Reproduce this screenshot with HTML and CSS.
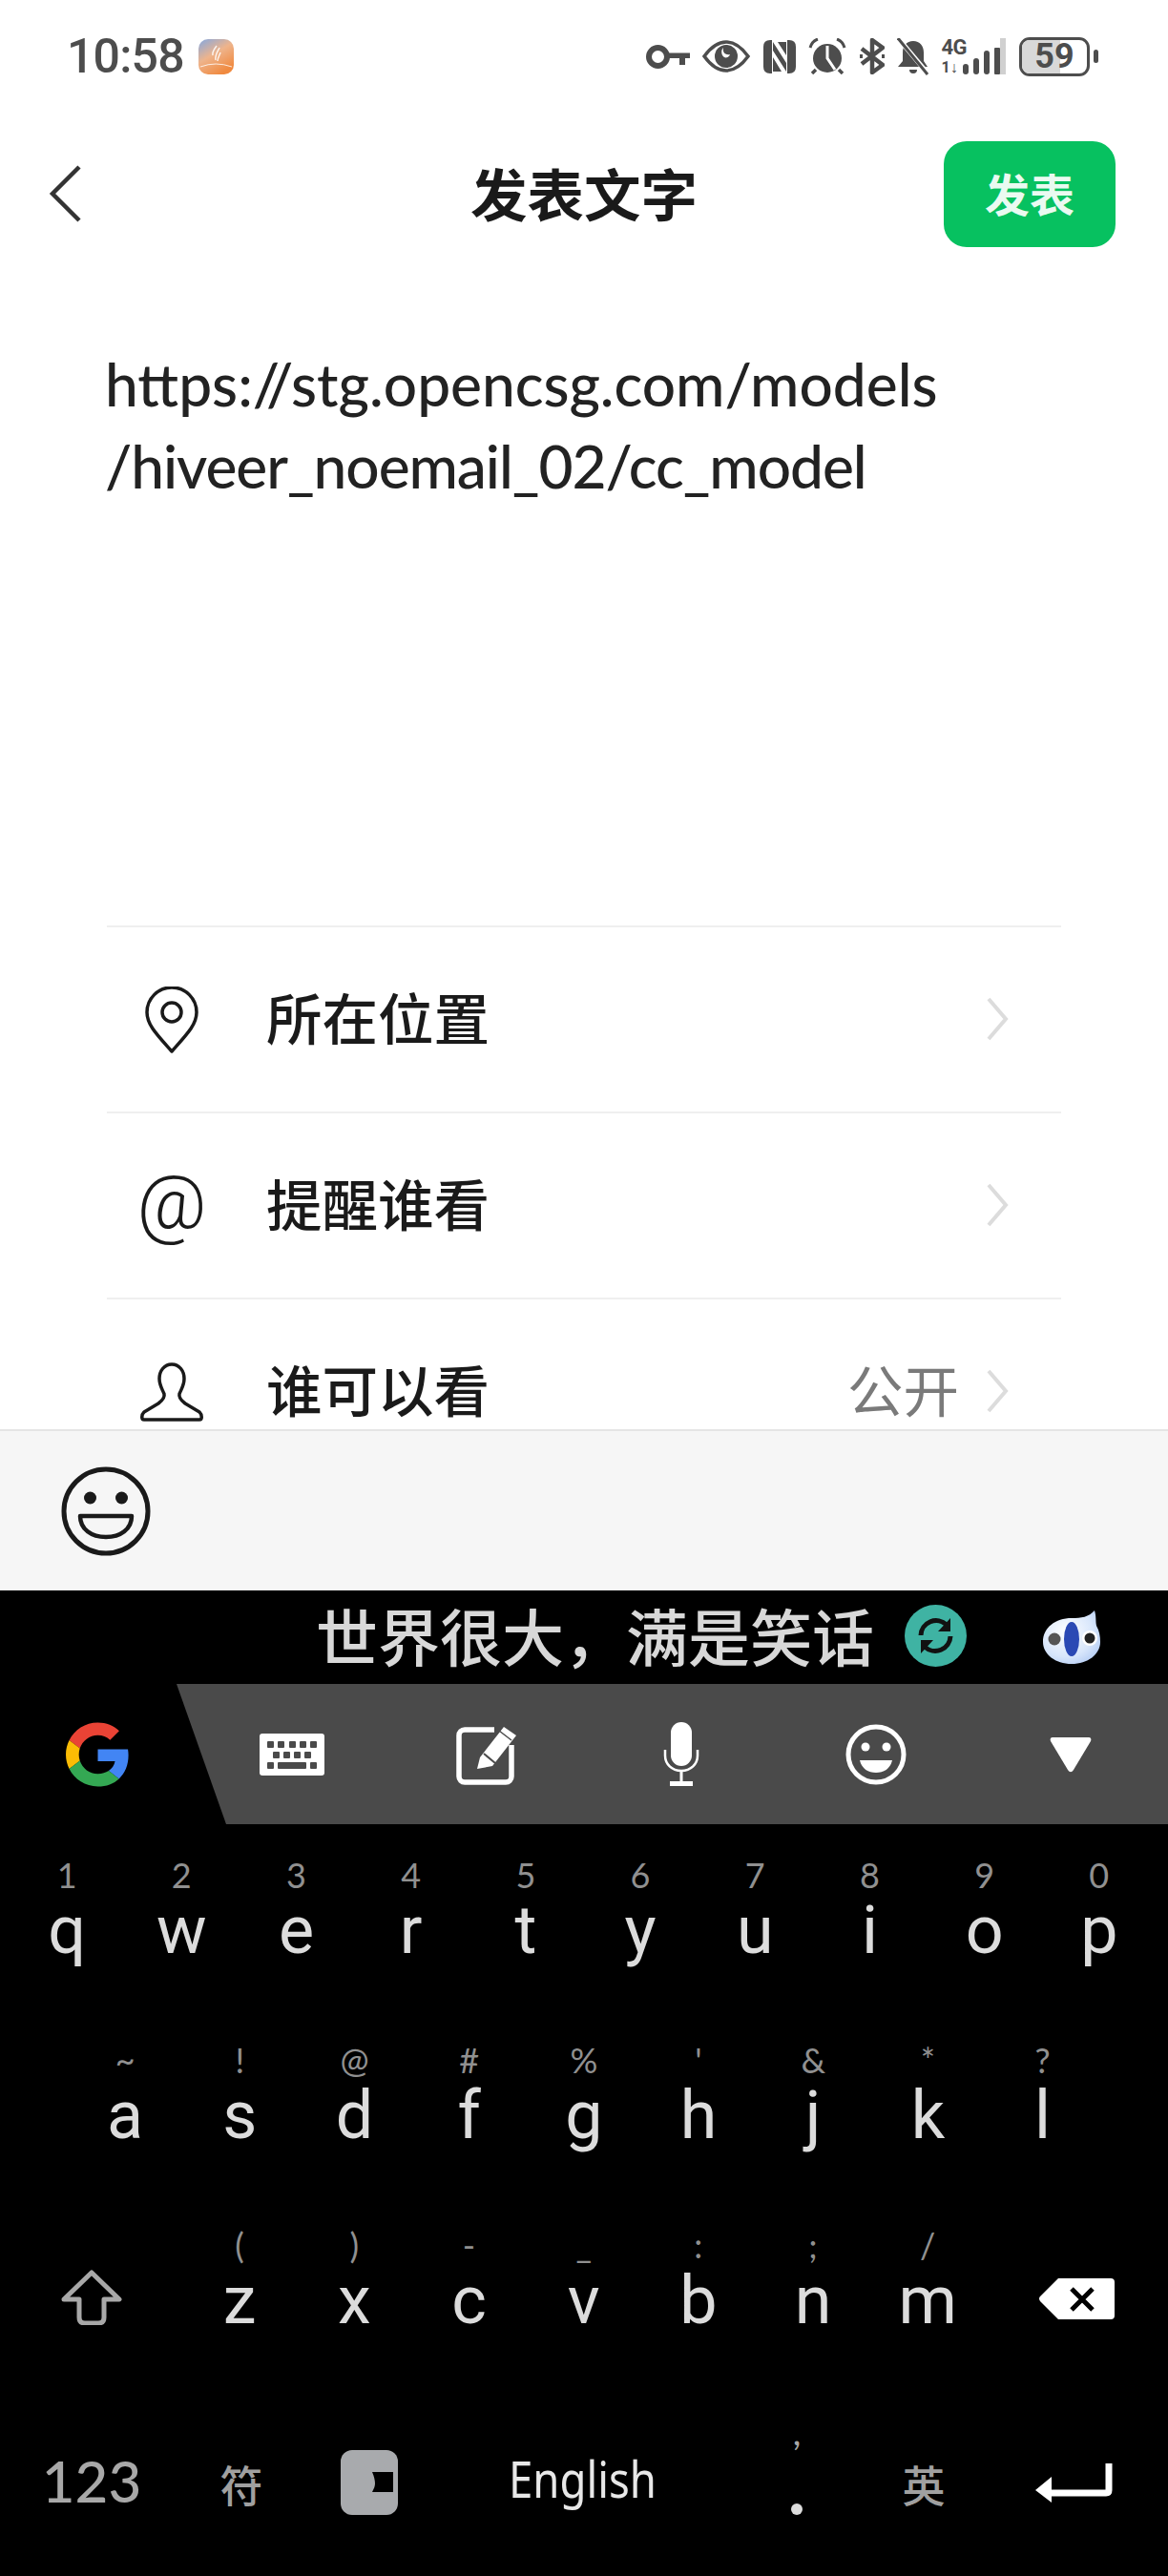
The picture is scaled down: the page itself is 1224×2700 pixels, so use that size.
FILE: index.html
```html
<!DOCTYPE html>
<html lang="zh">
<head>
<meta charset="utf-8">
<title>发表文字</title>
<link rel="stylesheet" href="styles.css">
</head>
<body>
<div class="page">
  <header class="status">
    <span class="time">10:58</span>
    <svg class="app-icon" width="37" height="37" viewBox="0 0 37 37">
      <defs><linearGradient id="appg" x1="0" y1="0" x2="0.6" y2="1"><stop offset="0" stop-color="#84a8e0"/><stop offset="0.5" stop-color="#eeb48c"/><stop offset="1" stop-color="#f08a40"/></linearGradient></defs>
      <rect width="37" height="37" rx="10" fill="url(#appg)"/>
      <path d="M19 7c-3 4-5 7-4 10M22 9c-2 4-5 8-4 13M23 14c-1 3-3 6-3 9" fill="none" stroke="#fff" stroke-width="1.500" opacity=".85"/>
      <path d="M2 29q16-6 33 0" fill="none" stroke="#fff" stroke-width="1" opacity=".8"/>
    </svg>
    <div class="status-icons">
      <svg width="46" height="25" viewBox="0 0 46 25"><circle cx="12.500" cy="12.500" r="9.500" fill="none" stroke="#4d4d4d" stroke-width="6"/><path d="M21 8.500H46V14H41V21H35V14H21z" fill="#4d4d4d"/></svg>
      <svg width="50" height="34" viewBox="0 0 50 34"><path d="M2 17C10 6 17 2 25 2s15 4 23 15C40 28 33 32 25 32S10 28 2 17z" fill="none" stroke="#4d4d4d" stroke-width="3.500"/><circle cx="25" cy="17" r="12" fill="#4d4d4d"/><path d="M22 8c-1 5 2 8 7 7c-1 3-4 4-6 3c-3-2-4-7-1-10z" fill="#fff"/></svg>
      <svg width="34" height="35" viewBox="0 0 34 35"><path d="M7 0H9V35H7Q0 35 0 28V7Q0 0 7 0zM27 0H25V35H27Q34 35 34 28V7Q34 0 27 0z" fill="#4d4d4d"/><path d="M10 2L24 24V33L10 11zM10 18L19 33H10zM15 2H24V16z" fill="#4d4d4d"/></svg>
      <svg width="40" height="38" viewBox="0 0 40 38"><circle cx="20" cy="21" r="15" fill="#4d4d4d"/><path d="M2 10Q4 3 10 1M38 10Q36 3 30 1" fill="none" stroke="#4d4d4d" stroke-width="3"/><path d="M8 33L4 37M32 33L36 37" stroke="#4d4d4d" stroke-width="3.500"/><path d="M20 8V21L28 33" fill="none" stroke="#fff" stroke-width="3"/></svg>
      <svg width="26" height="38" viewBox="0 0 26 38"><path d="M2 11L24 28L13 36V2L24 10L2 27" fill="none" stroke="#4d4d4d" stroke-width="4.500" stroke-linejoin="round"/><path d="M0 19h3M23 19h3" stroke="#4d4d4d" stroke-width="4"/></svg>
      <svg width="34" height="39" viewBox="0 0 34 39"><path d="M17 3c7 0 11 5 11 12v9l4 6H1l5-6v-9c0-7 4-12 11-12z" fill="#4d4d4d"/><path d="M13 33h8a4 4 0 0 1-8 0z" fill="#4d4d4d"/><path d="M2 1L33 38" stroke="#fff" stroke-width="5"/><path d="M1 0L32 38" stroke="#4d4d4d" stroke-width="3"/></svg>
      <div class="net">
        <div class="net-labels"><span class="net-g">4G</span><span class="net-a">1↓</span></div>
        <svg class="bars" width="46" height="38" viewBox="0 0 46 38"><rect x="1" y="27" width="6" height="11" rx="3" fill="#4d4d4d"/><rect x="12" y="21" width="6" height="17" rx="3" fill="#4d4d4d"/><rect x="23" y="13" width="6" height="25" rx="3" fill="#4d4d4d"/><rect x="34" y="10" width="6" height="28" rx="1" fill="#4d4d4d"/><rect x="40" y="0" width="6" height="38" fill="#d0d0d0"/></svg>
      </div>
      <div class="battery">
        <div class="batt-body"><div class="batt-fill"></div><span class="batt-num">59</span></div>
        <div class="batt-nub"></div>
      </div>
    </div>
  </header>

  <nav class="navbar">
    <svg class="back" width="34" height="60" viewBox="0 0 34 60"><path d="M32 2L4 30L32 58" fill="none" stroke="#333" stroke-width="4.500"/></svg>
    <h1 class="title">发表文字</h1>
    <button class="publish"><span class="publish-text">发表</span></button>
  </nav>

  <main class="content">
    <section class="composer">
      <p class="post">https://stg.opencsg.com/models<br><span class="post-tight">/hiveer_noemail_02/cc_model</span></p>
    </section>
    <ul class="options">
      <li class="option">
        <span class="opt-icon"><svg width="56" height="70" viewBox="0 0 56 70"><path d="M28 68C12 50 2 40 2 27a26 26 0 0 1 52 0c0 13-10 23-26 41z" fill="none" stroke="#1a1a1a" stroke-width="3.500" stroke-linejoin="round"/><circle cx="28" cy="27" r="10" fill="none" stroke="#1a1a1a" stroke-width="3.500"/></svg></span>
        <span class="opt-label">所在位置</span>
        <svg class="chev" width="24" height="46" viewBox="0 0 24 46"><path d="M3 2L21 23L3 44" fill="none" stroke="#dcdcdc" stroke-width="4"/></svg>
      </li>
      <li class="option">
        <span class="opt-icon opt-at">@</span>
        <span class="opt-label">提醒谁看</span>
        <svg class="chev" width="24" height="46" viewBox="0 0 24 46"><path d="M3 2L21 23L3 44" fill="none" stroke="#dcdcdc" stroke-width="4"/></svg>
      </li>
      <li class="option">
        <span class="opt-icon"><svg width="68" height="62" viewBox="0 0 68 62"><path d="M34 2c-8 0-13 7-13 15c0 7 3 11 5 16c1 4-2 7-6 10L5 52c-3 3-3 8 0 8H63c3 0 3-5 0-8L48 43c-4-3-7-6-6-10c2-5 5-9 5-16C47 9 42 2 34 2z" fill="none" stroke="#1a1a1a" stroke-width="3.500" stroke-linejoin="round"/></svg></span>
        <span class="opt-label">谁可以看</span>
        <span class="opt-value">公开</span>
        <svg class="chev" width="24" height="46" viewBox="0 0 24 46"><path d="M3 2L21 23L3 44" fill="none" stroke="#dcdcdc" stroke-width="4"/></svg>
      </li>
    </ul>
  </main>

  <div class="emoji-bar">
    <svg width="94" height="94" viewBox="0 0 94 94"><circle cx="47" cy="47" r="44" fill="none" stroke="#1a1a1a" stroke-width="5"/><circle cx="30.500" cy="33" r="6.500" fill="#1a1a1a"/><circle cx="63.500" cy="33" r="6.500" fill="#1a1a1a"/><path d="M20 52H74C74 66 62 74 47 74S20 66 20 52z" fill="none" stroke="#1a1a1a" stroke-width="4.500" stroke-linejoin="round"/></svg>
  </div>

  <section class="keyboard">
    <div class="suggest">
      <span class="suggest-text">世界很大，满是笑话</span>
      <svg class="refresh" width="65" height="65" viewBox="0 0 65 65"><circle cx="32.500" cy="32.500" r="32.500" fill="#3fb3a3"/><path d="M17 32a16 16 0 0 1 27-11M48 33a16 16 0 0 1-27 11" fill="none" stroke="#111" stroke-width="5"/><path d="M48 14V28H35zM17 51V37H30z" fill="#111"/></svg>
      <svg class="parrot" width="60" height="56" viewBox="0 0 60 56">
        <defs><radialGradient id="pg" cx="0.4" cy="0.4" r="0.85"><stop offset="0" stop-color="#ffffff"/><stop offset="0.55" stop-color="#d8e6fb"/><stop offset="1" stop-color="#9dbcf0"/></radialGradient></defs>
        <path d="M0 33C0 18 13 8 30 8c10 0 18-1 24-8c2 6 1 11 2 16c3 5 4 11 4 17c0 13-13 23-30 23S0 46 0 33z" fill="url(#pg)"/>
        <ellipse cx="30" cy="30" rx="8" ry="18" fill="#2b49b4"/>
        <circle cx="12" cy="30" r="6.500" fill="#555"/><circle cx="49" cy="29" r="8" fill="#fff"/><circle cx="49" cy="29" r="5.500" fill="#222"/>
      </svg>
    </div>

    <div class="toolbar">
      <span class="tool"><svg width="67" height="68" viewBox="0 0 48 48"><path fill="#EA4335" d="M24 9.500c3.540 0 6.710 1.220 9.210 3.600l6.850-6.850C35.900 2.380 30.470 0 24 0 14.620 0 6.510 5.380 2.560 13.220l7.980 6.190C12.430 13.720 17.740 9.500 24 9.500z"/><path fill="#4285F4" d="M46.980 24.550c0-1.570-.15-3.090-.38-4.550H24v9.020h12.940c-.58 2.960-2.260 5.480-4.780 7.180l7.730 6c4.510-4.180 7.090-10.360 7.090-17.650z"/><path fill="#FBBC05" d="M10.530 28.590c-.48-1.450-.76-2.990-.76-4.590s.27-3.140.76-4.590l-7.980-6.190C.92 16.460 0 20.120 0 24c0 3.880.92 7.540 2.560 10.780l7.970-6.190z"/><path fill="#34A853" d="M24 48c6.480 0 11.930-2.130 15.890-5.810l-7.730-6c-2.150 1.450-4.920 2.300-8.160 2.300-6.260 0-11.570-4.220-13.470-9.910l-7.980 6.190C6.510 42.620 14.620 48 24 48z"/></svg></span>
      <span class="tool"><svg width="68" height="44" viewBox="0 0 68 44"><rect width="68" height="44" rx="3" fill="#fff"/><g fill="#4a4a4a"><rect x="8" y="8" width="7" height="7" rx="1"/><rect x="19" y="8" width="7" height="7" rx="1"/><rect x="31" y="8" width="7" height="7" rx="1"/><rect x="42" y="8" width="7" height="7" rx="1"/><rect x="53" y="8" width="7" height="7" rx="1"/><rect x="14" y="19" width="7" height="7" rx="1"/><rect x="25" y="19" width="7" height="7" rx="1"/><rect x="36" y="19" width="7" height="7" rx="1"/><rect x="47" y="19" width="7" height="7" rx="1"/><rect x="8" y="30" width="7" height="7" rx="1"/><rect x="19" y="30" width="30" height="7" rx="1"/><rect x="53" y="30" width="7" height="7" rx="1"/></g></svg></span>
      <span class="tool"><svg width="64" height="64" viewBox="0 0 64 64"><path d="M40 6H9a6 6 0 0 0-6 6V55a6 6 0 0 0 6 6H52a6 6 0 0 0 6-6V22" fill="none" stroke="#fff" stroke-width="5.500"/><path d="M22 47L25 35L50 3L63 12L38 44z" fill="#fff"/><path d="M29 31L41 41" stroke="#4a4a4a" stroke-width="2"/><path d="M45 7L58 17" stroke="#4a4a4a" stroke-width="1.500"/></svg></span>
      <span class="tool"><svg width="38" height="67" viewBox="0 0 38 67"><rect x="8" y="0" width="22" height="46" rx="11" fill="#fff"/><path d="M2 29V35C2 44 9 51 19 51S36 44 36 35V29" fill="none" stroke="#fff" stroke-width="2.500"/><path d="M19 51V63" stroke="#fff" stroke-width="3"/><rect x="7" y="62" width="24" height="5" fill="#fff"/></svg></span>
      <span class="tool"><svg width="64" height="64" viewBox="0 0 64 64"><circle cx="32" cy="32" r="29" fill="none" stroke="#fff" stroke-width="5"/><circle cx="21" cy="24" r="4.500" fill="#fff"/><circle cx="43" cy="24" r="4.500" fill="#fff"/><path d="M15 38H49C47 47 40 51 32 51S17 47 15 38z" fill="#fff"/></svg></span>
      <span class="tool"><svg width="44" height="38" viewBox="0 0 44 38"><path d="M3 1H41C43 1 44 3 43 5L25 35C23 38 21 38 19 35L1 5C0 3 1 1 3 1z" fill="#fff"/></svg></span>
    </div>

    <div class="keys row-10">
      <div class="key"><span class="sym">1</span><span class="let">q</span></div>
      <div class="key"><span class="sym">2</span><span class="let">w</span></div>
      <div class="key"><span class="sym">3</span><span class="let">e</span></div>
      <div class="key"><span class="sym">4</span><span class="let">r</span></div>
      <div class="key"><span class="sym">5</span><span class="let">t</span></div>
      <div class="key"><span class="sym">6</span><span class="let">y</span></div>
      <div class="key"><span class="sym">7</span><span class="let">u</span></div>
      <div class="key"><span class="sym">8</span><span class="let">i</span></div>
      <div class="key"><span class="sym">9</span><span class="let">o</span></div>
      <div class="key"><span class="sym">0</span><span class="let">p</span></div>
    </div>
    <div class="keys row-9">
      <div class="key"><span class="sym">~</span><span class="let">a</span></div>
      <div class="key"><span class="sym">!</span><span class="let">s</span></div>
      <div class="key"><span class="sym">@</span><span class="let">d</span></div>
      <div class="key"><span class="sym">#</span><span class="let">f</span></div>
      <div class="key"><span class="sym">%</span><span class="let">g</span></div>
      <div class="key"><span class="sym">'</span><span class="let">h</span></div>
      <div class="key"><span class="sym">&amp;</span><span class="let">j</span></div>
      <div class="key"><span class="sym">*</span><span class="let">k</span></div>
      <div class="key"><span class="sym">?</span><span class="let">l</span></div>
    </div>
    <div class="keys row-shift">
      <div class="key key-icon"><svg width="64" height="58" viewBox="0 0 64 58"><path d="M32 3L61 31H45V50Q45 56 39 56H25Q19 56 19 50V31H3z" fill="none" stroke="#a8a8a8" stroke-width="5" stroke-linejoin="round"/></svg></div>
      <div class="key"><span class="sym">(</span><span class="let">z</span></div>
      <div class="key"><span class="sym">)</span><span class="let">x</span></div>
      <div class="key"><span class="sym">-</span><span class="let">c</span></div>
      <div class="key"><span class="sym">_</span><span class="let">v</span></div>
      <div class="key"><span class="sym">:</span><span class="let">b</span></div>
      <div class="key"><span class="sym">;</span><span class="let">n</span></div>
      <div class="key"><span class="sym">/</span><span class="let">m</span></div>
      <div class="key key-icon"><svg width="79" height="43" viewBox="0 0 79 43"><path d="M20 0H75Q79 0 79 4V39Q79 43 75 43H20L1 24Q-1 21 1 19z" fill="#fff"/><path d="M34 11L56 33M56 11L34 33" stroke="#000" stroke-width="5"/></svg></div>
    </div>
    <div class="bottom-row">
      <span class="fn-num">123</span>
      <span class="fn-cjk">符</span>
      <svg width="60" height="68" viewBox="0 0 60 68"><rect width="60" height="68" rx="12" fill="#a8aaad"/><path d="M33 23H55V44H33C35 40 36 38 36 35C36 32 35 27 33 23z" fill="#000"/></svg>
      <span class="space">English</span>
      <span class="period"><span class="comma">,</span><span class="dot"></span></span>
      <span class="fn-cjk">英</span>
      <svg class="enter" width="81" height="41" viewBox="0 0 81 41"><path d="M77 0V28Q77 31 74 31H17" fill="none" stroke="#fff" stroke-width="7"/><path d="M17 14V41L0 28z" fill="#fff"/></svg>
    </div>
  </section>
</div>
</body>
</html>
```
FILE: styles.css
```css
* { box-sizing: border-box; }
html, body { margin: 0; padding: 0; background: #fff; }
body { font-family: "Noto Sans CJK SC", sans-serif; }
.page { width: 1224px; height: 2700px; overflow: hidden; display: flex; flex-direction: column; }

/* status bar */
.status { height: 118px; flex: none; display: flex; align-items: center; padding: 0 73px 0 70px; }
.time { font-family: Roboto, sans-serif; font-weight: 500; font-size: 50px; line-height: 1; color: #4d4d4d; letter-spacing: -0.8px; }
.app-icon { margin-left: 15px; }
.status-icons { margin-left: auto; display: flex; align-items: center; gap: 13.5px; }
.net { display: flex; align-items: flex-end; height: 38px; margin-left: -1px; }
.net-labels { display: flex; flex-direction: column; width: 21px; height: 38px; font-family: Roboto, sans-serif; font-weight: 700; color: #4d4d4d; }
.net-g { font-size: 22px; line-height: 20px; letter-spacing: -0.5px; white-space: nowrap; }
.net-a { font-size: 16px; line-height: 16px; margin-top: 3px; white-space: nowrap; }
.bars { display: block; }
.battery { display: flex; align-items: center; gap: 4px; margin-left: 1px; }
.batt-body { position: relative; width: 74px; height: 41px; border: 3px solid #4d4d4d; border-radius: 11px; overflow: hidden; display: flex; align-items: center; justify-content: center; }
.batt-fill { position: absolute; left: 0; top: 0; bottom: 0; width: 59%; background: #d8d8d8; }
.batt-num { position: relative; font-family: Roboto, sans-serif; font-weight: 700; font-size: 36px; line-height: 1; color: #4d4d4d; }
.batt-nub { width: 5px; height: 14px; border-radius: 3px; background: #4d4d4d; }

/* nav */
.navbar { height: 170px; flex: none; display: grid; grid-template-columns: 1fr auto 1fr; align-items: center; padding: 0 55px; }
.back { display: block; margin-left: -4px; }
.title { margin: 0 0 3px; font-size: 59.5px; font-weight: 700; line-height: 1; color: #1a1a1a; }
.publish { justify-self: end; width: 180px; height: 111px; border: 0; border-radius: 24px; background: #07c160; color: #eafaf1; font-family: inherit; font-size: 47px; font-weight: 700; padding: 0 0 3px; }
.publish-text { display: block; }

/* content */
.content { height: 1212px; flex: none; overflow: hidden; border-bottom: 2px solid #e5e5e5; }
.composer { height: 682px; padding: 71px 110px 0; }
.post { margin: 0; font-family: Lato, sans-serif; font-weight: 500; font-size: 62.2px; line-height: 86px; color: #222; white-space: nowrap; }
.post-tight { letter-spacing: -1.05px; }
.options { list-style: none; margin: 0 112px; padding: 0; }
.option { height: 195px; border-top: 2px solid #efefef; display: flex; align-items: center; padding-right: 55px; }
.opt-icon { width: 136px; flex: none; display: flex; justify-content: center; margin-right: 31px; color: #1a1a1a; }
.opt-icon svg { display: block; }
.opt-at { font-family: Roboto, sans-serif; font-weight: 300; font-size: 80px; line-height: 72px; margin-bottom: 8px; }
.opt-label { font-size: 58.5px; line-height: 1; font-weight: 500; color: #1a1a1a; margin-bottom: 6px; }
.opt-value { margin-left: auto; font-size: 58.5px; line-height: 1; color: #7a7a7a; margin-bottom: 6px; }
.chev { display: block; margin: 0 0 2px auto; }
.opt-value + .chev { margin-left: 28px; }

/* emoji */
.emoji-bar { height: 167px; flex: none; background: #f6f6f6; display: flex; align-items: center; padding: 0 0 0 64px; }

/* keyboard */
.keyboard { flex: 1; background: #000; display: flex; flex-direction: column; }
.suggest { height: 98px; flex: none; display: flex; align-items: center; padding: 0 71px 0 331px; }
.suggest-text { font-size: 65px; font-weight: 500; line-height: 1; color: #d8d8d8; white-space: nowrap; margin-bottom: 6px; }
.refresh { margin-left: 32px; margin-bottom: 4px; display: block; }
.parrot { margin-left: auto; display: block; }
.toolbar { position: relative; height: 147px; flex: none; display: grid; grid-template-columns: repeat(6, 204px); }
.toolbar::before { content: ""; position: absolute; inset: 0; background: #4a4a4a; clip-path: polygon(185px 0, 100% 0, 100% 100%, 237px 100%); }
.tool { position: relative; display: flex; align-items: center; justify-content: center; }
.keys { height: 194px; flex: none; display: grid; }
.row-10 { grid-template-columns: repeat(10, 120.2px); padding-left: 10px; }
.row-9 { grid-template-columns: repeat(9, 120.2px); padding-left: 71px; }
.row-shift { grid-template-columns: 191px repeat(7, 120.2px) 1fr; }
.key { display: flex; flex-direction: column; align-items: center; padding-top: 34px; }
.key-icon { justify-content: flex-start; padding-top: 79px; }
.row-shift .key-icon:last-child { padding-top: 88px; }
.sym { font-family: Lato, sans-serif; font-size: 36px; line-height: 38px; height: 38px; color: #909090; }
.let { font-family: Roboto, sans-serif; font-weight: 400; font-size: 70px; line-height: 72px; margin-top: 3px; color: #dcdcdc; }
.bottom-row { flex: 1; display: grid; grid-template-columns: 192px 122px 146px 300px 150px 116px 198px; justify-items: center; align-items: start; padding-top: 74px; }
.fn-num { font-family: Lato, sans-serif; font-weight: 500; font-size: 60px; line-height: 60px; color: #a8a8a8; padding-top: 2px; }
.fn-cjk { font-size: 45px; font-weight: 500; line-height: 45px; color: #a0a0a0; padding-top: 13px; }
.space { font-family: "Noto Sans", sans-serif; font-size: 52px; line-height: 60px; color: #e8e8e8; transform: scaleX(0.875); }
.period { display: flex; flex-direction: column; align-items: center; height: 72px; }
.comma { font-family: Lato, sans-serif; font-size: 38px; line-height: 30px; color: #a8a8a8; margin-top: -35px; }
.dot { width: 12px; height: 12px; border-radius: 50%; background: #dcdcdc; margin-top: 61px; }
.enter { margin-top: 14px; }
```
